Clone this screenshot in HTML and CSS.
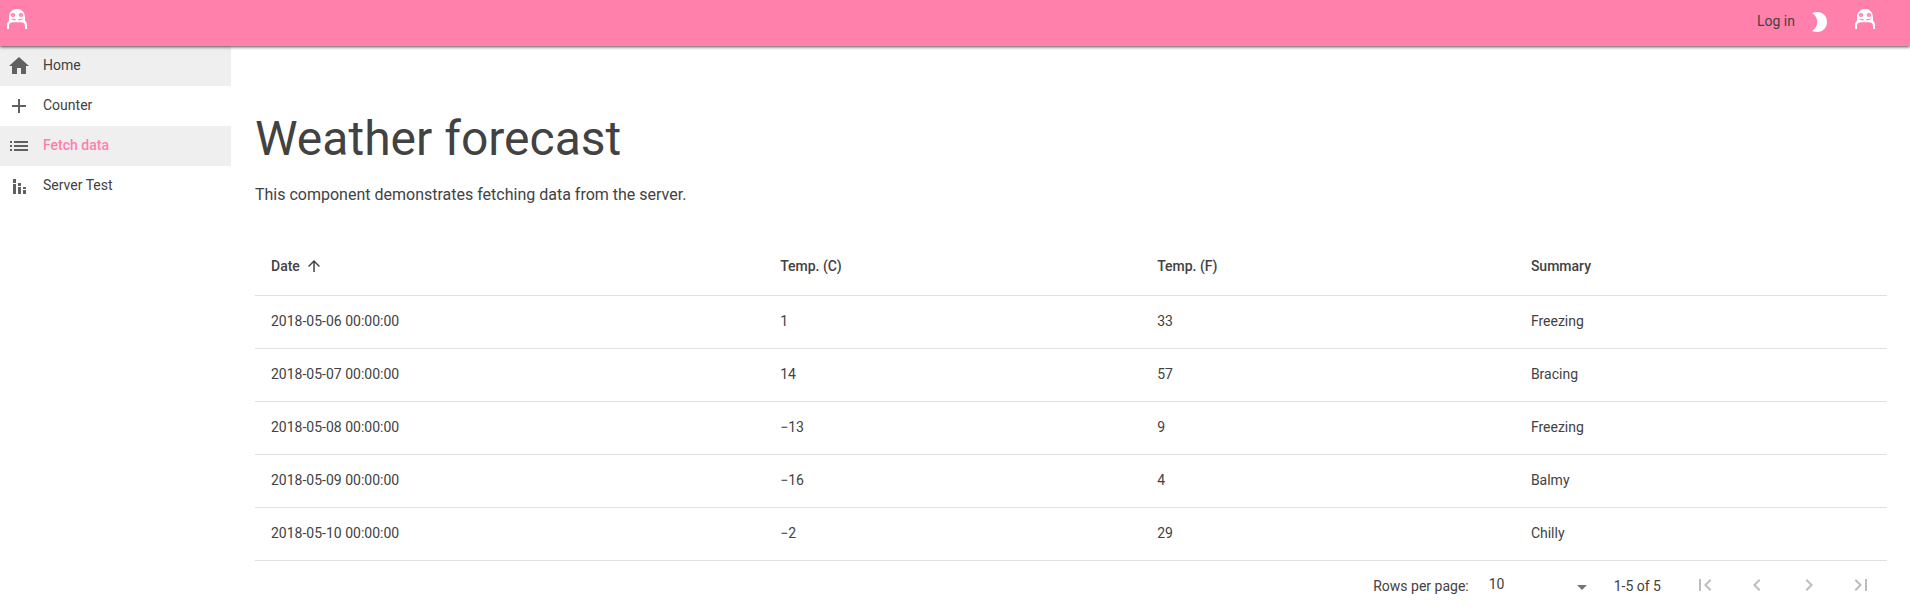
FILE: index.html
```html
<!DOCTYPE html>
<html lang="en">
<head>
<meta charset="utf-8">
<title>Weather forecast</title>
<link rel="stylesheet" href="styles.css">
</head>
<body>
<svg class="sprite" aria-hidden="true">
  <symbol id="logo" viewBox="0 0 20 20">
    <path fill="currentColor" fill-rule="evenodd" d="M0 20V16C0 14 .8 12.600 2 11.500V8C2 3 5.500 0 10 0S18 3 18 8V11.500C19.200 12.600 20 14 20 16V20H18V17C18 14.500 16.500 13.300 14 13.300H6C3.500 13.300 2 14.500 2 17V20ZM6 4C4.600 4 3.800 4.900 3.800 6S4.600 8 6 8S8.200 7.100 8.200 6S7.400 4 6 4ZM14 4C12.600 4 11.800 4.900 11.800 6S12.600 8 14 8S16.200 7.100 16.200 6S15.400 4 14 4ZM3.500 9.500C5 11 6.500 11.400 8.500 11.400V10C6.500 10 5 9.900 3.500 9.500ZM16.500 9.500C15 11 13.500 11.400 11.500 11.400V10C13.500 10 15 9.900 16.500 9.500Z"/>
    <circle fill="currentColor" cx="6" cy="6" r=".6"/>
    <circle fill="currentColor" cx="14" cy="6" r=".6"/>
  </symbol>
</svg>
<header class="topbar">
  <a class="brand" href="#" aria-label="Start page"><svg class="logo"><use href="#logo"/></svg></a>
  <div class="actions">
    <a class="login" href="#">Log in</a>
    <button class="plain moon" aria-label="Dark theme"><svg viewBox="0 0 16 20" width="16" height="20"><path fill="currentColor" d="M0 1C9-2 15 3 15 10S9 22 0 19C7 15 7 5 0 1Z"/></svg></button>
    <a class="brand" href="#" aria-label="Project"><svg class="logo"><use href="#logo"/></svg></a>
  </div>
</header>
<div class="shell">
  <nav class="sidebar">
    <a class="item shaded" href="#"><svg class="icon" viewBox="0 0 24 24"><path d="M10 20v-6h4v6h5v-8h3L12 3 2 12h3v8z"/></svg><span>Home</span></a>
    <a class="item" href="#"><svg class="icon" viewBox="0 0 24 24"><path d="M19 13h-6v6h-2v-6H5v-2h6V5h2v6h6v2z"/></svg><span>Counter</span></a>
    <a class="item shaded active" href="#" aria-current="page"><svg class="icon" viewBox="0 0 24 24"><path d="M3 13h2v-2H3v2zm0 4h2v-2H3v2zm0-8h2V7H3v2zm4 4h14v-2H7v2zm0 4h14v-2H7v2zM7 7v2h14V7H7z"/></svg><span>Fetch data</span></a>
    <a class="item" href="#"><svg class="icon" viewBox="0 0 24 24"><path d="M6 10h3v10H6zm0-5h3v4H6zm10 11h3v4h-3zm0-3h3v2h-3zm-5 0h3v7h-3zm0-4h3v3h-3z"/></svg><span>Server Test</span></a>
  </nav>
  <main class="content">
    <h1>Weather forecast</h1>
    <p>This component demonstrates fetching data from the server.</p>
    <table>
      <colgroup><col class="c-date"><col class="c-temp-c"><col class="c-temp-f"><col></colgroup>
      <thead><tr>
        <th aria-sort="ascending"><button class="plain sort">Date <svg viewBox="0 0 24 24" width="18" height="18"><path d="M4 12l1.410 1.410L11 7.830V20h2V7.830l5.580 5.590L20 12l-8-8-8 8z"/></svg></button></th>
        <th>Temp. (C)</th><th>Temp. (F)</th><th>Summary</th>
      </tr></thead>
      <tbody>
        <tr><td>2018-05-06 00:00:00</td><td>1</td><td>33</td><td>Freezing</td></tr>
        <tr><td>2018-05-07 00:00:00</td><td>14</td><td>57</td><td>Bracing</td></tr>
        <tr><td>2018-05-08 00:00:00</td><td>−13</td><td>9</td><td>Freezing</td></tr>
        <tr><td>2018-05-09 00:00:00</td><td>−16</td><td>4</td><td>Balmy</td></tr>
        <tr><td>2018-05-10 00:00:00</td><td>−2</td><td>29</td><td>Chilly</td></tr>
      </tbody>
    </table>
    <div class="pager">
      <label class="caption" for="rows">Rows per page:</label>
      <div class="select"><select id="rows"><option>10</option></select><svg viewBox="0 0 10 5" width="10" height="5"><path d="M0 0h10L5 5z"/></svg></div>
      <span class="caption">1-5 of 5</span>
      <div class="buttons">
        <button class="plain page" disabled aria-label="First page"><svg class="icon" viewBox="0 0 24 24"><path d="M18.410 16.590L13.820 12l4.590-4.590L17 6l-6 6 6 6zM6 6h2v12H6z"/></svg></button>
        <button class="plain page" disabled aria-label="Previous page"><svg class="icon" viewBox="0 0 24 24"><path d="M15.410 7.410L14 6l-6 6 6 6 1.410-1.410L10.830 12z"/></svg></button>
        <button class="plain page" disabled aria-label="Next page"><svg class="icon" viewBox="0 0 24 24"><path d="M10 6L8.590 7.410 13.170 12l-4.580 4.590L10 18l6-6z"/></svg></button>
        <button class="plain page" disabled aria-label="Last page"><svg class="icon" viewBox="0 0 24 24"><path d="M5.590 7.410L10.180 12l-4.590 4.590L7 18l6-6-6-6zM16 6h2v12h-2z"/></svg></button>
      </div>
    </div>
  </main>
</div>
</body>
</html>
```
FILE: styles.css
```css
* { box-sizing: border-box; }
body {
  margin: 0;
  background: #fff;
  color: #424242;
  font-family: Roboto, "Liberation Sans", sans-serif;
  font-size: 14px;
  line-height: 20px;
}
a { color: inherit; text-decoration: none; }
.sprite { position: absolute; width: 0; height: 0; }
.plain { padding: 0; border: 0; background: none; color: inherit; font: inherit; }
.icon { display: block; width: 24px; height: 24px; fill: currentColor; }

.topbar {
  position: relative;
  display: flex;
  justify-content: space-between;
  height: 46px;
  padding: 9px 35px 0 7px;
  background: #ff80ab;
  box-shadow: 0 1px 3px rgba(0, 0, 0, .7);
}
.brand { color: #fff; height: 20px; }
.logo { display: block; width: 20px; height: 20px; }
.actions { display: flex; align-items: flex-start; }
.login { padding-top: 2px; margin-right: 17px; }
.moon { display: block; color: #fff; margin: 3px 27px 0 0; height: 20px; }
.moon svg { display: block; }

.shell { display: flex; }
.sidebar { flex: 0 0 231px; }
.item { display: flex; gap: 12px; height: 40px; padding: 8px 7px; }
.item .icon { color: #616161; }
.item span { line-height: 22px; }
.shaded { background: #efefef; }
.active { color: #ff80ab; font-weight: 500; }

.content { flex: 1; min-width: 0; padding: 65px 23px 0 24px; }
h1 { margin: 0; font-size: 48px; font-weight: 400; line-height: 56px; }
p { margin: 16px 0 31px; font-size: 16px; line-height: 24px; }
table { width: 100%; border-collapse: collapse; table-layout: fixed; }
.c-date { width: 31.2%; }
.c-temp-c { width: 23.1%; }
.c-temp-f { width: 22.9%; }
th, td { height: 53px; padding: 0 16px 2px; text-align: left; border-bottom: 1px solid #e0e0e0; }
th { height: 57px; padding-bottom: 0; font-weight: 500; }
.sort { display: flex; align-items: center; gap: 5px; }
.sort svg { fill: currentColor; }

.pager { display: flex; align-items: center; justify-content: flex-end; height: 48px; padding-right: 2px; }
.caption { padding-top: 2px; }
.select { position: relative; width: 98px; margin: 0 27px 0 20px; }
.select select {
  display: block;
  width: 100%;
  height: 24px;
  padding: 0 0 2px;
  border: 0;
  background: none;
  color: inherit;
  font: inherit;
  appearance: none;
}
.select svg { position: absolute; right: 0; top: 12px; fill: #757575; pointer-events: none; }
.buttons { display: flex; gap: 4px; margin-left: 20px; }
.page { display: grid; place-items: center; width: 48px; height: 48px; color: #bdbdbd; }
```
